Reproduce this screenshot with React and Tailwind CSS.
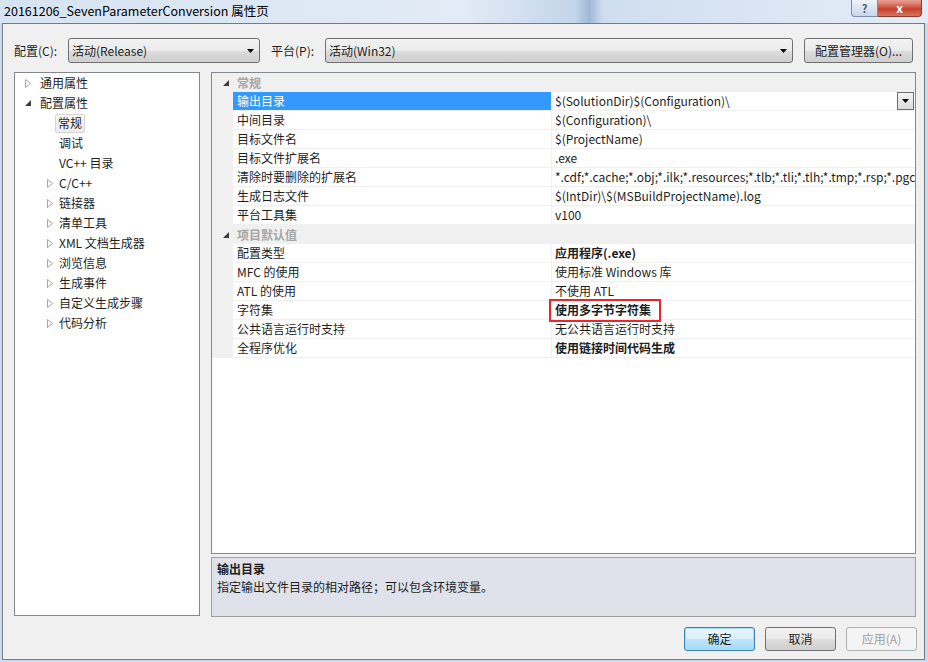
import React from "react";

const tree = [
  { label: "通用属性", level: 0, arrow: "closed" },
  { label: "配置属性", level: 0, arrow: "open" },
  { label: "常规", level: 1, selected: true },
  { label: "调试", level: 1 },
  { label: "VC++ 目录", level: 1 },
  { label: "C/C++", level: 1, arrow: "closed" },
  { label: "链接器", level: 1, arrow: "closed" },
  { label: "清单工具", level: 1, arrow: "closed" },
  { label: "XML 文档生成器", level: 1, arrow: "closed" },
  { label: "浏览信息", level: 1, arrow: "closed" },
  { label: "生成事件", level: 1, arrow: "closed" },
  { label: "自定义生成步骤", level: 1, arrow: "closed" },
  { label: "代码分析", level: 1, arrow: "closed" },
];

const general = [
  { name: "输出目录", value: "$(SolutionDir)$(Configuration)\\", selected: true },
  { name: "中间目录", value: "$(Configuration)\\" },
  { name: "目标文件名", value: "$(ProjectName)" },
  { name: "目标文件扩展名", value: ".exe" },
  { name: "清除时要删除的扩展名", value: "*.cdf;*.cache;*.obj;*.ilk;*.resources;*.tlb;*.tli;*.tlh;*.tmp;*.rsp;*.pgc;*.pgd" },
  { name: "生成日志文件", value: "$(IntDir)\\$(MSBuildProjectName).log" },
  { name: "平台工具集", value: "v100" },
];

const defaults = [
  { name: "配置类型", value: "应用程序(.exe)", bold: true },
  { name: "MFC 的使用", value: "使用标准 Windows 库" },
  { name: "ATL 的使用", value: "不使用 ATL" },
  { name: "字符集", value: "使用多字节字符集", bold: true, marked: true },
  { name: "公共语言运行时支持", value: "无公共语言运行时支持" },
  { name: "全程序优化", value: "使用链接时间代码生成", bold: true },
];

function ClosedArrow() {
  return (
    <svg width="6" height="9" viewBox="0 0 6 9">
      <polygon points="0.5,0.5 5.5,4.5 0.5,8.5" fill="#fff" stroke="#a6a6a6" />
    </svg>
  );
}

function OpenArrow() {
  return (
    <svg width="6" height="6" viewBox="0 0 6 6">
      <polygon points="6,0 6,6 0,6" fill="#3c3c3c" />
    </svg>
  );
}

function DownArrow() {
  return (
    <svg width="7" height="4" viewBox="0 0 7 4">
      <polygon points="0,0 7,0 3.5,4" fill="#000" />
    </svg>
  );
}

function Select({ value, className }) {
  return (
    <div className={"h-[25px] flex items-center justify-between rounded-[3px] border border-[#707070] bg-[linear-gradient(#f2f2f2,#ebebeb_50%,#dddddd_51%,#cfcfcf)] pl-[3px] pr-[5px] " + className}>
      <span>{value}</span>
      <DownArrow />
    </div>
  );
}

function Category({ label }) {
  return (
    <div className="h-[19px] flex items-center bg-[#f0f0f0]">
      <div className="w-[21px] flex justify-end pr-[4px]">
        <OpenArrow />
      </div>
      <span className="pl-[4px] font-bold text-[#a6a6a6]">{label}</span>
    </div>
  );
}

function PropRow({ row }) {
  return (
    <div className="h-[19px] flex bg-[#f0f0f0]">
      <div className="w-[21px]" />
      <div
        className={
          "w-[318px] h-full flex items-center pl-[4px] border-b border-[#f0f0f0] " +
          (row.selected ? "bg-[#3399ff] text-white" : "bg-white")
        }
      >
        {row.name}
      </div>
      <div className="w-px bg-[#f0f0f0]" />
      <div className="flex-1 min-w-0 h-full flex items-center bg-white border-b border-[#f0f0f0]">
        <div className={"relative flex-1 min-w-0 pl-[3px] whitespace-nowrap " + (row.bold ? "font-bold" : "")}>
          <span className="block overflow-hidden">{row.value}</span>
          {row.marked && (
            <div className="absolute left-[-3px] top-[-3px] w-[112px] h-[23px] border-2 border-[#e8262b]" />
          )}
        </div>
        {row.selected && (
          <div className="shrink-0 mr-[1px] w-[17px] h-[18px] flex items-center justify-center border border-[#6d6d6d] bg-[linear-gradient(#f4f4f4,#dcdcdc)]">
            <DownArrow />
          </div>
        )}
      </div>
    </div>
  );
}

export default function App() {
  return (
    <div className="w-[928px] h-[662px] overflow-hidden flex flex-col bg-[#c8dbef] text-[12px] leading-[16px] text-[#1e1e1e] font-['Noto_Sans_CJK_SC','Noto_Sans',sans-serif]">
      {/* title bar */}
      <div className="h-[23px] shrink-0 flex bg-[linear-gradient(90deg,#d6e3f1_0%,#e2ebf6_50%,#c3d5ea_62%,#9fb8d4_63.5%,#cfdeef_65%,#e4edf7_100%)]">
        <div className="pl-[4px] pt-[3px] text-[12.5px] text-black">20161206_SevenParameterConversion 属性页</div>
        <div className="ml-auto mr-[6px] flex h-[17px]">
          <div className="w-[27px] flex items-center justify-center rounded-bl-[4px] border border-t-0 border-[#7b8ca3] bg-[linear-gradient(#eef3f9,#c9d8e9)] text-[11px] font-bold text-[#4a5a70]">?</div>
          <div className="w-[44px] flex items-center justify-center rounded-br-[4px] border border-t-0 border-l-0 border-[#8a3a33] bg-[linear-gradient(#e8a495,#cf5a47_45%,#c4402d_55%,#d8735f)] text-[12px] font-bold text-white">x</div>
        </div>
      </div>

      {/* window body */}
      <div className="ml-[2px] w-[923px] h-[637px] shrink-0 border border-[#7a7a7a] bg-[#f0f0f0] flex flex-col">
        {/* config row */}
        <div className="mt-[14px] h-[25px] flex items-center pl-[11px]">
          <div className="w-[54px]">配置(C):</div>
          <Select value="活动(Release)" className="w-[192px]" />
          <div className="ml-[11px] w-[54px]">平台(P):</div>
          <Select value="活动(Win32)" className="w-[468px]" />
          <div className="ml-[11px] w-[109px] h-[25px] flex items-center justify-center rounded-[3px] border border-[#707070] bg-[linear-gradient(#f2f2f2,#ebebeb_50%,#dddddd_51%,#cfcfcf)]">
            配置管理器(O)...
          </div>
        </div>

        {/* main */}
        <div className="mt-[9px] flex pl-[11px]">
          <div className="w-[186px] h-[544px] border border-[#828790] bg-white">
            {tree.map((t, i) => (
              <div key={i} className="h-[20px] flex items-center">
                <div className={"flex justify-center " + (t.level === 0 ? "w-[25px] pl-[4px] pr-[4px]" : "w-[44px] pl-[26px]")}>
                  {t.arrow === "closed" && <ClosedArrow />}
                  {t.arrow === "open" && <OpenArrow />}
                </div>
                {t.selected ? (
                  <span className="ml-[-4px] px-[2px] h-[19px] flex items-center rounded-[2px] border border-[#d4d4d4] bg-[linear-gradient(#f7f7f7,#ececec)]">{t.label}</span>
                ) : (
                  <span>{t.label}</span>
                )}
              </div>
            ))}
          </div>

          <div className="ml-[11px] w-[705px] flex flex-col">
            <div className="h-[482px] border border-[#828790] bg-white overflow-hidden">
              <Category label="常规" />
              {general.map((r, i) => (
                <PropRow key={i} row={r} />
              ))}
              <Category label="项目默认值" />
              {defaults.map((r, i) => (
                <PropRow key={i} row={r} />
              ))}
            </div>
            <div className="mt-[3px] h-[60px] border border-[#a0a0a0] bg-[#dfe2ea] pl-[5px] pt-[2px] leading-[18px]">
              <div className="font-bold">输出目录</div>
              <div>指定输出文件目录的相对路径；可以包含环境变量。</div>
            </div>
          </div>
        </div>

        {/* buttons */}
        <div className="mt-[10px] flex justify-end gap-[10px] pr-[7px]">
          <div className="w-[71px] h-[24px] flex items-center justify-center rounded-[3px] border border-[#3c7fb1] bg-[linear-gradient(#eaf6fd,#d9f0fc_50%,#bee6fd_51%,#a7d9f5)] shadow-[inset_0_0_0_1px_#a6dcf7]">
            确定
          </div>
          <div className="w-[71px] h-[24px] flex items-center justify-center rounded-[3px] border border-[#707070] bg-[linear-gradient(#f2f2f2,#ebebeb_50%,#dddddd_51%,#cfcfcf)]">
            取消
          </div>
          <div className="w-[71px] h-[24px] flex items-center justify-center rounded-[3px] border border-[#adb2b5] bg-[#f4f4f4] text-[#a0a0a0]">
            应用(A)
          </div>
        </div>
      </div>
    </div>
  );
}
